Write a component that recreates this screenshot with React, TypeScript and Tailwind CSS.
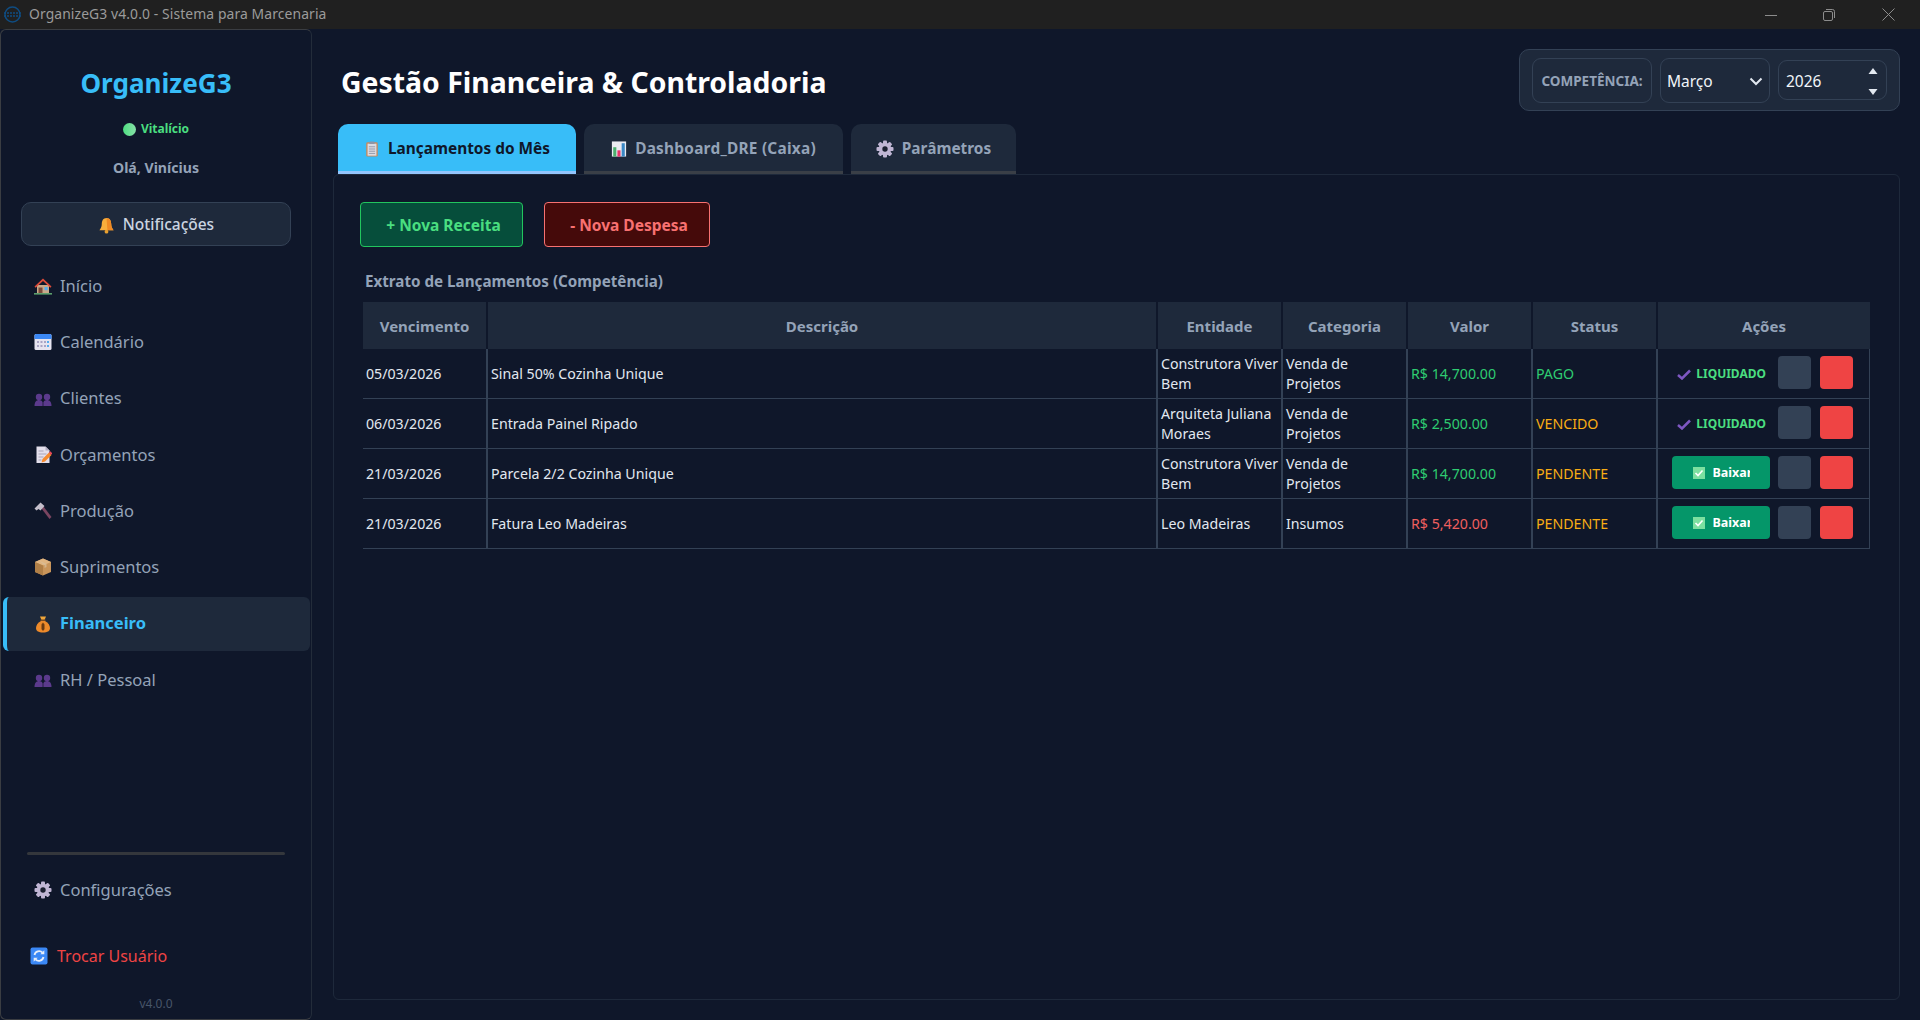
import type { ReactNode } from "react";

function Emoji({ children, size = 18 }: { children: ReactNode; size?: number }) {
  return (
    <svg width={size} height={size} viewBox="0 0 18 18" className="shrink-0">
      {children}
    </svg>
  );
}

const HouseIcon = () => (
  <Emoji>
    <rect x="3" y="8" width="12" height="9" fill="#c9a98a" />
    <path d="M0.5 9.5 9 1.5l8.5 8-1.2 1.2L9 4 1.7 10.7z" fill="#dd4b39" />
    <rect x="4.5" y="10.5" width="4" height="6.5" fill="#7a4a3a" />
    <rect x="10.5" y="10" width="3.2" height="3.2" fill="#55acee" />
    <rect x="0" y="16" width="18" height="1.6" fill="#5c9e6c" />
  </Emoji>
);

const CalendarIcon = () => (
  <Emoji>
    <rect x="0.5" y="1" width="17" height="16" rx="1.5" fill="#e6e4f0" />
    <path d="M0.5 2.5A1.5 1.5 0 0 1 2 1h14a1.5 1.5 0 0 1 1.5 1.5V6h-17z" fill="#3b88f5" />
    <g fill="#a9a4c4">
      <rect x="3" y="8" width="2" height="2" />
      <rect x="6.5" y="8" width="2" height="2" />
      <rect x="10" y="8" width="2" height="2" />
      <rect x="13" y="8" width="2" height="2" fill="#55acee" />
      <rect x="3" y="12" width="2" height="2" />
      <rect x="6.5" y="12" width="2" height="2" />
      <rect x="10" y="12" width="2" height="2" />
      <rect x="13" y="12" width="2" height="2" fill="#55acee" />
    </g>
  </Emoji>
);

const PeopleIcon = () => (
  <Emoji>
    <g fill="#5b3a8c">
      <circle cx="5" cy="7" r="3.2" />
      <circle cx="13" cy="7" r="3.2" />
      <path d="M0.5 16c0-4 1.8-6 4.5-6 1.7 0 3 .8 3.6 2.2V16z" />
      <path d="M9.4 16v-3.8C10 10.8 11.3 10 13 10c2.7 0 4.5 2 4.5 6z" />
    </g>
  </Emoji>
);

const MemoIcon = () => (
  <Emoji>
    <path d="M2.5 0.5h9l4 4V17h-13z" fill="#e4e0ec" />
    <path d="M11.5 0.5l4 4h-4z" fill="#b5afc4" />
    <path d="M4.5 5h5M4.5 8h8M4.5 11h5M4.5 14h3" stroke="#a9a4b8" strokeWidth="1" />
    <path d="M7.5 16.5l1-3.5 6.5-6.5 2.5 2.5-6.5 6.5z" fill="#f58a2e" />
    <path d="M15 6.5l1.2-1.2 2 2L17 9z" fill="#e8475a" />
  </Emoji>
);

const HammerIcon = () => (
  <Emoji>
    <path d="M7.5 6.5l2-2 8 10.5-2 2z" fill="#7a4560" />
    <path d="M0.5 6.5 6.5 0.5l4 3.5-4 4.5-2-1.5-2 1.5z" fill="#c4bfcb" />
  </Emoji>
);

const BoxIcon = () => (
  <Emoji>
    <path d="M9 0.5 17 4v10l-8 3.5L1 14V4z" fill="#c9955a" />
    <path d="M9 0.5 17 4 9 7.5 1 4z" fill="#e0b581" />
    <path d="M9 7.5v10L1 14V4z" fill="#b07f47" />
    <path d="M4.5 2.5l8 3.5v3l-2 1V7z" fill="#d7c0a0" opacity="0.7" />
  </Emoji>
);

const MoneyIcon = () => (
  <Emoji>
    <path d="M6 1.5h6L10.5 5h-3z" fill="#f0a63a" />
    <rect x="6.5" y="4.5" width="5" height="1.5" fill="#7a4a20" />
    <path d="M7 6C3.5 8 2 10.5 2 13c0 3 2.5 4.5 7 4.5s7-1.5 7-4.500c0-2.500-1.500-5-5-7z" fill="#ee8a2a" />
    <rect x="7.5" y="8.5" width="3" height="6.5" rx="1.2" fill="#6b3a12" />
    <rect x="8.5" y="7.8" width="1" height="8" fill="#6b3a12" />
  </Emoji>
);

const GearIcon = () => (
  <Emoji>
    <g fill="#c0b6d4">
      <rect x="7" y="0.5" width="4" height="17" rx="1" />
      <rect x="7" y="0.5" width="4" height="17" rx="1" transform="rotate(45 9 9)" />
      <rect x="7" y="0.5" width="4" height="17" rx="1" transform="rotate(90 9 9)" />
      <rect x="7" y="0.5" width="4" height="17" rx="1" transform="rotate(135 9 9)" />
      <circle cx="9" cy="9" r="6.3" />
    </g>
    <circle cx="9" cy="9" r="2.7" fill="#1b2030" />
  </Emoji>
);

const SwapIcon = () => (
  <Emoji>
    <rect x="0.5" y="0.5" width="17" height="17" rx="2" fill="#3b88f5" />
    <path d="M4.5 8a4.7 4.7 0 0 1 8-2.3" fill="none" stroke="#e8eef8" strokeWidth="1.8" />
    <path d="M14.3 3.3v4h-4z" fill="#e8eef8" />
    <path d="M13.5 10a4.7 4.7 0 0 1-8 2.3" fill="none" stroke="#e8eef8" strokeWidth="1.8" />
    <path d="M3.7 14.7v-4h4z" fill="#e8eef8" />
  </Emoji>
);

const BellIcon = () => (
  <Emoji size={17}>
    <path d="M9 1c3.5 0 5 3 5 6.5 0 3 1.2 5 2.5 6.5h-15C2.8 12.500 4 10.500 4 7.500 4 4 5.500 1 9 1z" fill="#f9ae3c" />
    <path d="M9 1c3.5 0 5 3 5 6.5 0 3 1.2 5 2.5 6.5H10z" fill="#f08a24" />
    <circle cx="9" cy="15.5" r="2" fill="#e9a030" />
  </Emoji>
);

const ClipboardIcon = () => (
  <Emoji size={16}>
    <rect x="2.5" y="1.5" width="13" height="16" rx="1.5" fill="#c8895a" />
    <rect x="4" y="3" width="10" height="13.5" fill="#dcdce4" />
    <rect x="6" y="0.5" width="6" height="3" rx="1" fill="#8f95a6" />
    <path d="M5.5 6.5h7M5.5 9h7M5.5 11.5h7M5.5 14h7" stroke="#8f95a6" strokeWidth="1" />
  </Emoji>
);

const ChartIcon = () => (
  <Emoji size={16}>
    <rect x="1" y="0.5" width="16" height="17" fill="#ecebf2" />
    <rect x="2.5" y="7" width="3.5" height="10.5" fill="#4caf6e" />
    <rect x="7.2" y="10.5" width="3.5" height="7" fill="#e8356a" />
    <rect x="12" y="2.5" width="3.5" height="15" fill="#3b88c5" />
  </Emoji>
);

const nav = [
  { label: "Início", icon: <HouseIcon /> },
  { label: "Calendário", icon: <CalendarIcon /> },
  { label: "Clientes", icon: <PeopleIcon /> },
  { label: "Orçamentos", icon: <MemoIcon /> },
  { label: "Produção", icon: <HammerIcon /> },
  { label: "Suprimentos", icon: <BoxIcon /> },
  { label: "Financeiro", icon: <MoneyIcon />, active: true },
  { label: "RH / Pessoal", icon: <PeopleIcon /> },
];

const rows = [
  { date: "05/03/2026", desc: "Sinal 50% Cozinha Unique", ent: "Construtora Viver Bem", cat: "Venda de Projetos", val: "R$ 14,700.00", up: true, status: "PAGO", done: true },
  { date: "06/03/2026", desc: "Entrada Painel Ripado", ent: "Arquiteta Juliana Moraes", cat: "Venda de Projetos", val: "R$ 2,500.00", up: true, status: "VENCIDO", done: true },
  { date: "21/03/2026", desc: "Parcela 2/2 Cozinha Unique", ent: "Construtora Viver Bem", cat: "Venda de Projetos", val: "R$ 14,700.00", up: true, status: "PENDENTE", done: false },
  { date: "21/03/2026", desc: "Fatura Leo Madeiras", ent: "Leo Madeiras", cat: "Insumos", val: "R$ 5,420.00", up: false, status: "PENDENTE", done: false },
];

const headers = ["Vencimento", "Descrição", "Entidade", "Categoria", "Valor", "Status", "Ações"];

function TitleBar() {
  return (
    <div className="flex h-[29px] shrink-0 items-center bg-[#202020] pl-[3px] text-[#9b9b9b]">
      <svg width="19" height="19" viewBox="0 0 19 19">
        <circle cx="9.5" cy="9.5" r="7.5" fill="none" stroke="#0f4c81" strokeWidth="1.5" />
        <path d="M1 8h17M1 11h17" stroke="#0f4c81" strokeWidth="1.5" strokeDasharray="2 1" />
      </svg>
      <span className="ml-[7px] text-[13.9px] tracking-[0.1px]">OrganizeG3 v4.0.0 - Sistema para Marcenaria</span>
      <div className="ml-auto flex items-center">
        <svg width="12" height="12" viewBox="0 0 12 12" className="mr-[46px]">
          <path d="M0 6.5h12" stroke="#8c8c8c" strokeWidth="1" />
        </svg>
        <svg width="12" height="12" viewBox="0 0 12 12" className="mr-[47px]">
          <rect x="0.5" y="2.5" width="9" height="9" rx="1.5" fill="none" stroke="#8c8c8c" />
          <path d="M3 0.5h6.5a2 2 0 0 1 2 2V9" fill="none" stroke="#8c8c8c" />
        </svg>
        <svg width="13" height="13" viewBox="0 0 13 13" className="mr-[25px]">
          <path d="M0.5 0.5l12 12M12.5 0.5l-12 12" stroke="#8c8c8c" strokeWidth="1" />
        </svg>
      </div>
    </div>
  );
}

function Sidebar() {
  return (
    <aside className="flex w-[312px] shrink-0 flex-col rounded-md border border-[#3a3d42] border-r-[#232c3a] bg-[#0f172a] pb-[7px]">
      <div className="mt-[35px] text-center text-[26.1px] leading-[36px] font-bold text-[#38bdf8]">OrganizeG3</div>
      <div className="mt-[18px] flex h-[20px] items-center justify-center gap-[5px] text-[12px] font-bold text-[#4ade80]">
        <span className="h-[13px] w-[13px] rounded-full bg-gradient-to-r from-[#4ade80] to-[#86e0a8]" />
        Vitalício
      </div>
      <div className="mt-[19px] text-center text-[14.1px] leading-[20px] font-bold text-[#94a3b8]">Olá, Vinícius</div>
      <div className="mx-[20px] mt-[24px] flex h-[44px] items-center justify-center gap-[8px] rounded-[10px] border border-[#334155] bg-[#1e293b] pt-[2px] text-[15.5px] font-medium text-[#cbd5e1]">
        <BellIcon />
        Notificações
      </div>
      <nav className="mt-[13px] flex flex-col gap-[2.3px]">
        {nav.map((item) => (
          <div
            key={item.label}
            className={
              item.active
                ? "ml-[2px] mr-[1px] flex h-[54px] items-center gap-[8px] rounded-md border-l-4 border-[#38bdf8] bg-[#1e293b] pl-[27px] text-[16.5px] font-bold text-[#38bdf8]"
                : "ml-[33px] flex h-[54px] items-center gap-[8px] text-[16.5px] text-[#94a3b8]"
            }
          >
            {item.icon}
            {item.label}
          </div>
        ))}
      </nav>
      <div className="mx-[26px] mt-auto h-[3px] rounded-full bg-[#34373c]" />
      <div className="ml-[33px] mt-[8px] flex h-[54px] items-center gap-[8px] text-[16.5px] text-[#94a3b8]">
        <GearIcon />
        Configurações
      </div>
      <div className="ml-[29px] mt-[12px] flex h-[54px] items-center gap-[9px] text-[16px] text-[#ef4444]">
        <SwapIcon />
        Trocar Usuário
      </div>
      <div className="mt-[13px] text-center text-[12px] leading-[16px] text-[#475569]">v4.0.0</div>
    </aside>
  );
}

function PeriodPicker() {
  return (
    <div className="flex h-[62px] w-[381px] items-center rounded-[10px] border border-[#334155] bg-[#1e293b] pl-[12px]">
      <div className="flex h-[45px] w-[120px] items-center justify-center rounded-[9px] border border-[#334155] pt-[2px] text-[13.5px] font-bold text-[#94a3b8]">
        COMPETÊNCIA:
      </div>
      <div className="ml-[8px] flex h-[45px] w-[110px] items-center justify-between rounded-[9px] border border-[#334155] pl-[6px] pr-[6px] pt-[3px] text-[15.5px] text-[#f1f5f9]">
        Março
        <svg width="14" height="9" viewBox="0 0 14 9">
          <path d="M1.5 1.5 7 7l5.5-5.5" fill="none" stroke="#e2e8f0" strokeWidth="2" />
        </svg>
      </div>
      <div className="ml-[8px] flex h-[40px] w-[109px] items-center justify-between rounded-[9px] border border-[#334155] pl-[7px] pr-[8px] pt-[3px] text-[15.5px] text-[#f1f5f9]">
        2026
        <div className="flex flex-col gap-[15px]">
          <svg width="10" height="6" viewBox="0 0 10 6"><path d="M5 0l4.5 6h-9z" fill="#e2e8f0" /></svg>
          <svg width="10" height="6" viewBox="0 0 10 6"><path d="M5 6 .5 0h9z" fill="#e2e8f0" /></svg>
        </div>
      </div>
    </div>
  );
}

function Actions({ done }: { done: boolean }) {
  return (
    <div className="flex items-center justify-end pb-[2px] pr-[16px]">
      {done ? (
        <div className="mr-[12px] flex items-center gap-[5px] pt-[2px] text-[12px] font-bold text-[#4ade80]">
          <svg width="14" height="11" viewBox="0 0 14 11" className="mt-[2px]">
            <path d="M1 6l4 3.5L13 1.5" fill="none" stroke="#7e57c2" strokeWidth="2.5" />
          </svg>
          LIQUIDADO
        </div>
      ) : (
        <div className="mr-[8px] flex h-[33px] w-[98px] items-center justify-center gap-[8px] rounded-[4px] bg-[#059669] text-[12.5px] font-bold text-white">
          <svg width="12" height="12" viewBox="0 0 12 12">
            <rect width="12" height="12" fill="#7ce0a0" />
            <path d="M2.5 6l2.5 2.5 4.5-5" fill="none" stroke="#fff" strokeWidth="1.6" />
          </svg>
          <span className="w-[37px] overflow-hidden whitespace-nowrap">Baixar</span>
        </div>
      )}
      <div className="h-[33px] w-[33px] rounded-[4px] bg-[#334155]" />
      <div className="ml-[9px] h-[33px] w-[33px] rounded-[4px] bg-[#ef4444]" />
    </div>
  );
}

function LaunchTable() {
  return (
    <table className="ml-[3px] mt-[11px] w-[1507px] table-fixed border-separate border-spacing-0 text-[14.2px] leading-[20px] text-[#e2e8f0]">
      <colgroup>
        <col className="w-[125px]" />
        <col className="w-[670px]" />
        <col className="w-[125px]" />
        <col className="w-[125px]" />
        <col className="w-[125px]" />
        <col className="w-[125px]" />
        <col className="w-[212px]" />
      </colgroup>
      <thead>
        <tr>
          {headers.map((h) => (
            <th key={h} className="h-[47px] border-r-2 border-[#0f172a] bg-[#1e293b] text-[15px] font-bold text-[#94a3b8] last:border-r-0">
              {h}
            </th>
          ))}
        </tr>
      </thead>
      <tbody>
        {rows.map((r, i) => (
          <tr key={i}>
            <td className="h-[50px] border-b border-r-2 border-[#334155] pl-[3px]">{r.date}</td>
            <td className="border-b border-r-2 border-[#334155] pl-[3px]">{r.desc}</td>
            <td className="border-b border-r-2 border-[#334155] pl-[3px]">{r.ent}</td>
            <td className="border-b border-r-2 border-[#334155] pl-[3px]">{r.cat}</td>
            <td className={r.up ? "border-b border-r-2 border-[#334155] pl-[3px] text-[#2ecc71]" : "border-b border-r-2 border-[#334155] pl-[3px] text-[#ef5f5f]"}>{r.val}</td>
            <td className={r.status === "PAGO" ? "border-b border-r-2 border-[#334155] pl-[3px] text-[#2ecc71]" : "border-b border-r-2 border-[#334155] pl-[3px] text-[#f9ad14]"}>{r.status}</td>
            <td className="border-b border-r border-[#334155]">
              <Actions done={r.done} />
            </td>
          </tr>
        ))}
      </tbody>
    </table>
  );
}

const tabBase = "flex h-[50px] items-center justify-center gap-[8px] rounded-t-[10px] border-b-[3px] pt-[3px] text-[15.4px] font-bold";

export default function App() {
  return (
    <div className="flex h-screen flex-col overflow-hidden bg-[#0f172a] font-['Noto_Sans',sans-serif]">
      <TitleBar />
      <div className="flex min-h-0 flex-1">
        <Sidebar />
        <main className="flex min-w-0 flex-1 flex-col pb-[20px] pl-[21px] pr-[20px]">
          <div className="flex h-[95px] shrink-0 items-start justify-between pt-[20px]">
            <h1 className="ml-[8px] mt-[13px] text-[28.4px] leading-[40px] font-bold text-white">Gestão Financeira &amp; Controladoria</h1>
            <PeriodPicker />
          </div>
          <div className="ml-[5px] flex shrink-0 gap-[8px]">
            <div className={tabBase + " w-[238px] border-[#93c5fd] bg-[#38bdf8] text-[#0f172a]"}>
              <ClipboardIcon />
              Lançamentos do Mês
            </div>
            <div className={tabBase + " w-[259px] border-[#3a3f47] bg-[#1e293b] tracking-[0.24px] text-[#94a3b8]"}>
              <ChartIcon />
              Dashboard_DRE (Caixa)
            </div>
            <div className={tabBase + " w-[165px] border-[#3a3f47] bg-[#1e293b] text-[#94a3b8]"}>
              <GearIcon />
              Parâmetros
            </div>
          </div>
          <section className="flex-1 rounded-md border border-[#1e293b] pl-[26px] pt-[27px]">
            <div className="flex gap-[21px]">
              <div className="flex h-[45px] w-[163px] items-center justify-center rounded-[4px] border border-[#22c55e] bg-[#064e3b] pl-[4px] pt-[2px] text-[15.5px] font-bold text-[#4ade80]">
                + Nova Receita
              </div>
              <div className="flex h-[45px] w-[166px] items-center justify-center rounded-[4px] border border-[#f87171] bg-[#450a0a] pl-[4px] pt-[2px] text-[15.5px] font-bold text-[#f87171]">
                - Nova Despesa
              </div>
            </div>
            <div className="ml-[5px] mt-[24px] text-[15.2px] leading-[20px] font-bold text-[#94a3b8]">Extrato de Lançamentos (Competência)</div>
            <LaunchTable />
          </section>
        </main>
      </div>
    </div>
  );
}
